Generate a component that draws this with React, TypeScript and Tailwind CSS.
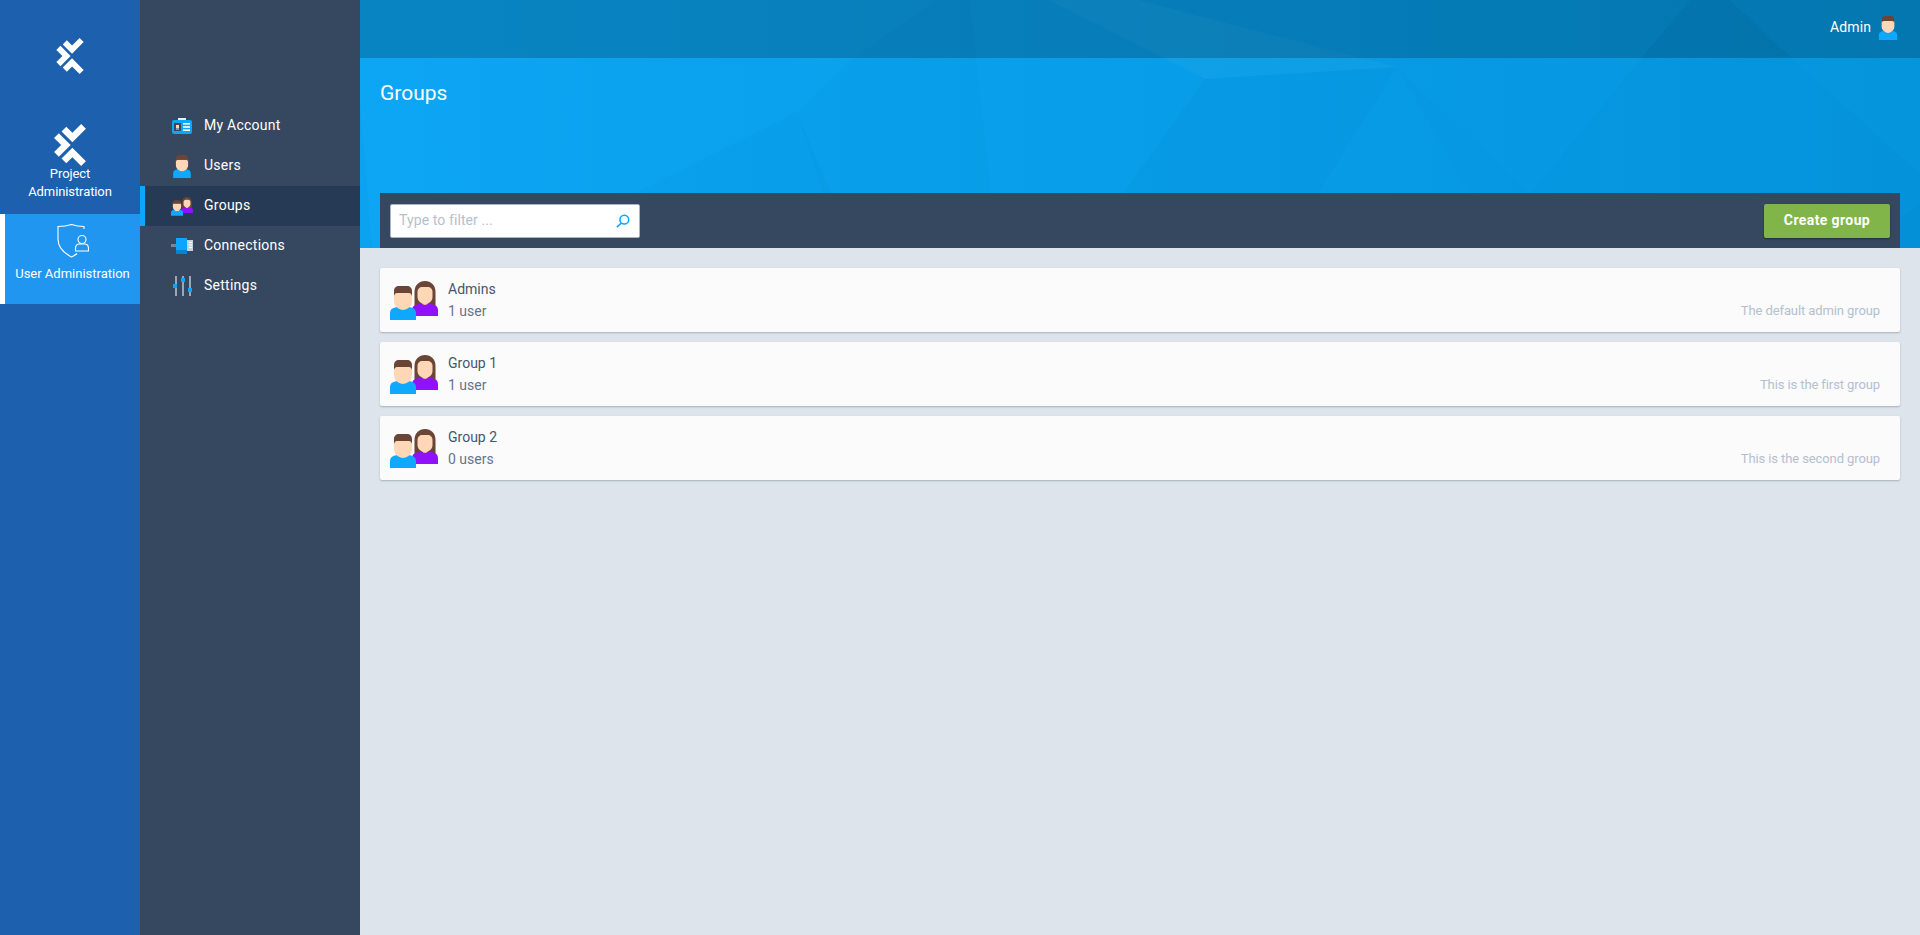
import React from "react";

function Logo({ className }: { className: string }) {
  return (
    <svg viewBox="24 18 94 124" className={className} fill="#fff">
      <polygon points="46,40 60,26 78,44 104,18 118,32 78,72" />
      <polygon points="24,59 38,45 73,80 38,115 24,101 45,80" />
      <polygon points="46,120 78,88 118,128 104,142 78,116 60,134" />
    </svg>
  );
}

function Man({ className }: { className: string }) {
  return (
    <svg viewBox="0 0 26 34" className={className}>
      <path d="M0 34v-7c0-3 2-5 5-5.500l4-1h8l4 1c3 .5 5 2.500 5 5.500v7z" fill="#0ea8ff" />
      <path d="M9 18h8v4c-1 2.500-7 2.500-8 0z" fill="#f4c6a0" />
      <path d="M4 7h18v8c0 5-4 8.500-9 8.500S4 20 4 15z" fill="#fdd7b6" />
      <path d="M4 10V5c0-3 2-5 5-5h8c3 0 5 2 5 5v5c-.5-2-1.500-3-3-3H7c-1.500 0-2.500 1-3 3z" fill="#6b4535" />
    </svg>
  );
}

function Woman({ className }: { className: string }) {
  return (
    <svg viewBox="0 0 26 35" className={className}>
      <path d="M2.500 27V11C2.500 4 7 0 13 0s10.500 4 10.500 11v16z" fill="#6b4535" />
      <path d="M0 35v-6c0-3 2-5 5-5.500l5-1.500h6l5 1.500c3 .5 5 2.500 5 5.500v6z" fill="#8f12fb" />
      <path d="M10 18h6v4c-1 2.500-5 2.500-6 0z" fill="#f4c6a0" />
      <path d="M5.500 11c0-3 2-5 5-5h5c3 0 5 2 5 5v5c0 4-3.500 7-7.500 7s-7.500-3-7.500-7z" fill="#fdd7b6" />
    </svg>
  );
}

function Couple({ small }: { small?: boolean }) {
  if (small) {
    return (
      <div className="relative w-[22px] h-[19px]">
        <Woman className="absolute right-0 top-0 w-[12px] h-[16px]" />
        <Man className="absolute left-0 bottom-0 w-[12px] h-[16px]" />
      </div>
    );
  }
  return (
    <div className="relative w-[48px] h-[39px] shrink-0">
      <Woman className="absolute right-0 top-0 w-[26px] h-[35px]" />
      <Man className="absolute left-0 bottom-0 w-[26px] h-[34px]" />
    </div>
  );
}

function CardIcon() {
  return (
    <svg viewBox="0 0 20 16" className="w-[20px] h-[16px]">
      <rect x="6" y="0" width="8" height="3" fill="#e8eef5" />
      <rect x="0" y="2" width="20" height="14" rx="2" fill="#0ea5ff" />
      <rect x="2" y="5" width="7" height="8" fill="#36485f" />
      <rect x="4" y="6.500" width="3" height="3.500" fill="#fdd7b6" />
      <rect x="4" y="6" width="3" height="1" fill="#6b4535" />
      <rect x="4" y="10" width="3" height="2" fill="#8a97a8" />
      <rect x="11" y="5" width="7" height="1.600" fill="#fff" />
      <rect x="11" y="8.200" width="7" height="1.600" fill="#fff" />
      <rect x="11" y="11.400" width="7" height="1.600" fill="#fff" />
    </svg>
  );
}

function PlugIcon() {
  return (
    <svg viewBox="0 0 22 16" className="w-[22px] h-[16px]">
      <rect x="0" y="6" width="6" height="3" fill="#76859a" />
      <rect x="5" y="0" width="11" height="12" fill="#0ea5ff" />
      <rect x="5" y="12" width="11" height="4" fill="#0a82d0" />
      <rect x="16" y="2" width="6" height="11" fill="#c9d1da" />
      <rect x="18" y="4" width="3" height="1" fill="#fff" />
      <rect x="18" y="6.500" width="3" height="1" fill="#fff" />
      <rect x="18" y="9" width="3" height="1" fill="#fff" />
    </svg>
  );
}

function SlidersIcon() {
  return (
    <svg viewBox="0 0 20 20" className="w-[20px] h-[20px]">
      <rect x="3" y="0" width="2" height="20" fill="#9aa7b8" />
      <rect x="10" y="0" width="2" height="20" fill="#9aa7b8" />
      <rect x="17" y="0" width="2" height="20" fill="#9aa7b8" />
      <rect x="1" y="8" width="4" height="4" fill="#0ea5ff" />
      <rect x="9" y="2" width="4" height="4" fill="#0ea5ff" />
      <rect x="16" y="12" width="4" height="4" fill="#0ea5ff" />
    </svg>
  );
}

function ShieldUser() {
  return (
    <svg viewBox="0 0 32 34" className="w-[32px] h-[34px]" fill="none" stroke="#fff" strokeWidth="1.100">
      <path d="M27 5V2.500C22 2.500 19 2 14.500 .5 10 2 6 2.500 1 2.500V15c0 8 5.500 14 13.500 18 2-1 4-2 5.500-3.500" />
      <circle cx="25" cy="15.500" r="4" />
      <path d="M18.500 27v-2.500c0-3 2-4.500 4-4.500h5c2 0 4 1.500 4 4.500V27z" />
    </svg>
  );
}

const navItems: { label: string; icon: React.ReactNode; active?: boolean }[] = [
  { label: "My Account", icon: <CardIcon /> },
  { label: "Users", icon: <Man className="w-[18px] h-[23px]" /> },
  { label: "Groups", icon: <Couple small />, active: true },
  { label: "Connections", icon: <PlugIcon /> },
  { label: "Settings", icon: <SlidersIcon /> },
];

const groups = [
  { name: "Admins", count: "1 user", desc: "The default admin group" },
  { name: "Group 1", count: "1 user", desc: "This is the first group" },
  { name: "Group 2", count: "0 users", desc: "This is the second group" },
];

export default function App() {
  return (
    <div className="flex h-screen overflow-hidden bg-[#dde4ec] font-['Roboto',sans-serif] text-[14px]">
      <aside className="w-[140px] shrink-0 bg-[#1d60ad] text-white flex flex-col items-stretch pt-[38px]">
        <div className="flex justify-center">
          <Logo className="w-[30px] h-[36px]" />
        </div>
        <div className="flex flex-col items-center mt-[50px] h-[90px]">
          <Logo className="w-[34px] h-[42px]" />
          <div className="text-[13px] leading-[18px] text-center mt-[-1px] tracking-[-0.1px]">
            Project
            <br />
            Administration
          </div>
        </div>
        <div className="h-[90px] bg-[#2196f0] border-l-[5px] border-white flex flex-col items-center pt-[10px]">
          <ShieldUser />
          <div className="text-[13px] leading-[18px] mt-[7px] whitespace-nowrap">User Administration</div>
        </div>
      </aside>

      <nav className="w-[220px] shrink-0 bg-[#36485f] pt-[106px] text-white">
        {navItems.map((it) => (
          <div
            key={it.label}
            className={
              it.active
                ? "h-[40px] flex items-center bg-[#273a55] border-l-[5px] border-[#0ea5ff]"
                : "h-[40px] flex items-center border-l-[5px] border-transparent"
            }
          >
            <div className="w-[24px] ml-[25px] flex justify-center">{it.icon}</div>
            <span className="ml-[10px] font-normal text-[14px] tracking-[0.25px] mb-[1px]">{it.label}</span>
          </div>
        ))}
      </nav>

      <main className="flex-1 flex flex-col min-w-0">
        <header className="relative h-[248px] shrink-0 flex flex-col bg-gradient-to-r from-[#0ca6f4] to-[#0595dd]">
          <svg
            viewBox="360 0 1560 248"
            preserveAspectRatio="none"
            className="absolute inset-0 w-full h-full"
          >
            <polygon points="408,58 580,43 547,248 499,248" fill="#fff" fillOpacity="0.008" />
            <polygon points="360,100 372,248 360,248" fill="#000" fillOpacity="0.02" />
            <polygon points="636,193 797,112 831,193 840,248 580,248" fill="#000" fillOpacity="0.014" />
            <polygon points="797,112 853,58 936,0 970,0 997,248 840,248" fill="#000" fillOpacity="0.01" />
            <polygon points="1049,0 1138,0 1397,67 1205,79" fill="#fff" fillOpacity="0.03" />
            <polygon points="1205,79 1397,67 1285,248 1084,248" fill="#000" fillOpacity="0.014" />
            <polygon points="1397,67 1530,193 1641,58 1690,0 1730,0 1792,58 1920,173 1920,248 1500,248" fill="#000" fillOpacity="0.006" />
            <polygon points="1641,58 1690,0 1730,0 1792,58" fill="#000" fillOpacity="0.02" />
            <polygon points="1850,248 1920,205 1920,248" fill="#000" fillOpacity="0.02" />
          </svg>
          <div className="relative h-[58px] shrink-0 bg-black/20 flex items-center justify-end pr-[22px] text-white">
            <span className="text-[14px] mr-[7px] mb-[4px] tracking-[0.1px]">Admin</span>
            <Man className="w-[20px] h-[24px] mb-[2px]" />
          </div>
          <h1 className="relative text-white text-[21px] leading-[28px] font-normal ml-[20px] mt-[21px]">Groups</h1>
          <div className="relative mt-auto mx-[20px] h-[55px] bg-[#36485f] flex items-center justify-between pl-[10px] pr-[10px]">
            <div className="w-[250px] h-[34px] bg-white rounded-[2px] border border-[#aab4c2] flex items-center pl-[8px] pr-[9px]">
              <input
                placeholder="Type to filter ..."
                className="flex-1 min-w-0 outline-none bg-transparent text-[14px] tracking-[0.1px] placeholder:text-[#b4bfd0]"
              />
              <svg viewBox="0 0 16 16" className="w-[14px] h-[14px]" fill="none" stroke="#0ea5ff" strokeWidth="1.800">
                <circle cx="9.500" cy="6.500" r="5" />
                <path d="M6 10.500 1 15" />
              </svg>
            </div>
            <button className="w-[126px] h-[34px] bg-[#81b54a] rounded-[2px] text-white font-bold text-[14px] tracking-[0.4px] shadow-[0_1px_2px_rgba(0,0,0,0.4)]">
              Create group
            </button>
          </div>
        </header>

        <section className="flex flex-col gap-[10px] px-[20px] pt-[20px]">
          {groups.map((g) => (
            <div
              key={g.name}
              className="h-[64px] bg-[#fbfbfb] rounded-[2px] shadow-[0_1px_2px_rgba(60,80,100,0.35)] flex items-center pl-[10px] pr-[20px]"
            >
              <Couple />
              <div className="ml-[10px] flex flex-col">
                <span className="text-[#45566e] text-[14px] leading-[22px]">{g.name}</span>
                <span className="text-[#64748b] text-[14px] leading-[22px]">{g.count}</span>
              </div>
              <span className="ml-auto self-end mb-[12px] text-[#b4bfd0] text-[13px] leading-[18px] tracking-[-0.1px]">{g.desc}</span>
            </div>
          ))}
        </section>
      </main>
    </div>
  );
}
